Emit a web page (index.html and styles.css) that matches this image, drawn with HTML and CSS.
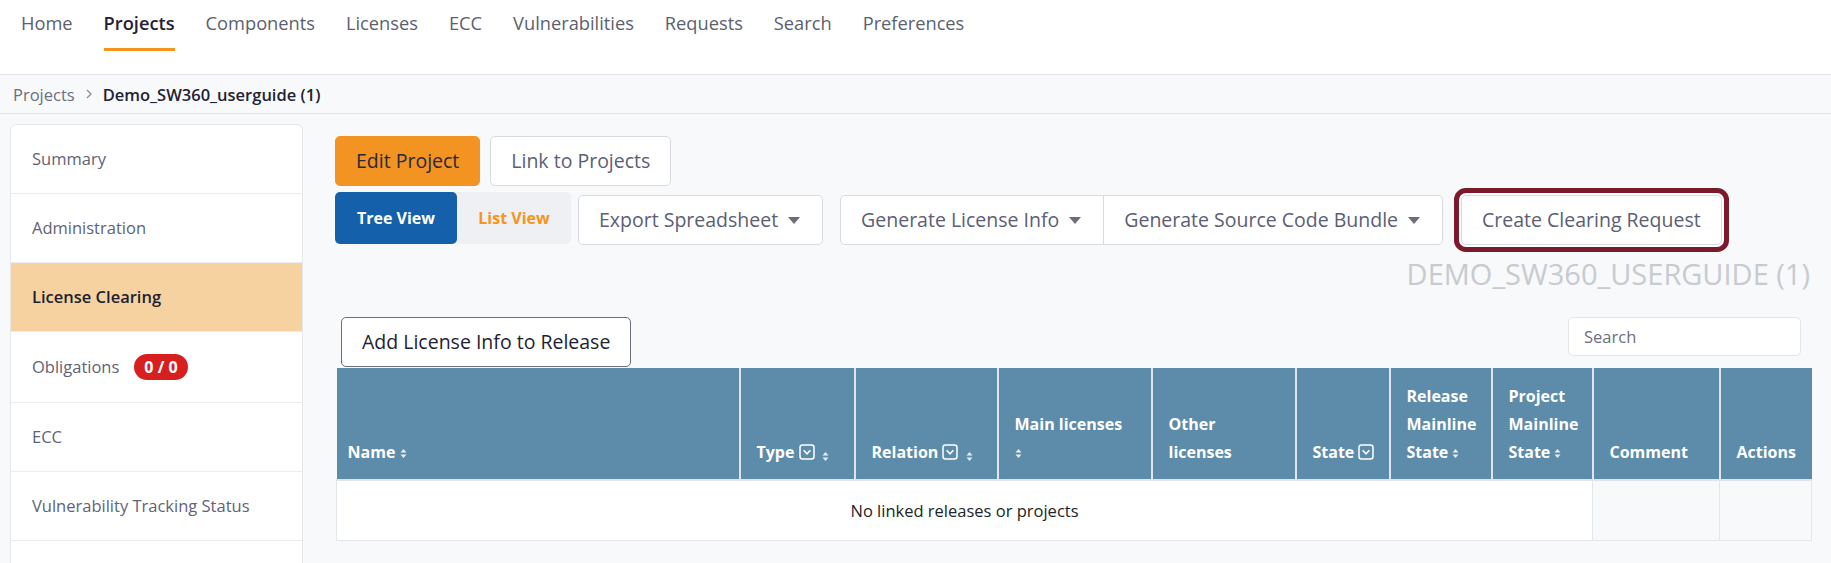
FILE: index.html
```html
<!DOCTYPE html>
<html lang="en">
<head>
<meta charset="utf-8">
<title>Demo_SW360_userguide (1) - Projects</title>
<link rel="stylesheet" href="styles.css">
</head>
<body>
<header class="topbar">
  <nav class="mainnav">
    <a class="nav-link">Home</a>
    <a class="nav-link active">Projects</a>
    <a class="nav-link">Components</a>
    <a class="nav-link">Licenses</a>
    <a class="nav-link">ECC</a>
    <a class="nav-link">Vulnerabilities</a>
    <a class="nav-link">Requests</a>
    <a class="nav-link">Search</a>
    <a class="nav-link">Preferences</a>
  </nav>
</header>
<div class="crumbs">
  <span class="crumb">Projects</span>
  <svg class="crumb-sep" width="6" height="10" viewBox="0 0 6 10"><path d="M1 1l4 4-4 4" fill="none" stroke="#8a8c96" stroke-width="1.2"/></svg>
  <span class="crumb current">Demo_SW360_userguide (1)</span>
</div>
<div class="layout">
  <aside class="sidebar">
    <a class="side-item">Summary</a>
    <a class="side-item">Administration</a>
    <a class="side-item active">License Clearing</a>
    <a class="side-item">Obligations <span class="badge">0 / 0</span></a>
    <a class="side-item">ECC</a>
    <a class="side-item">Vulnerability Tracking Status</a>
    <div class="side-item side-spacer"></div>
  </aside>
  <main class="content">
    <div class="btn-row">
      <button class="btn btn-primary">Edit Project</button>
      <button class="btn">Link to Projects</button>
    </div>
    <div class="btn-row row2">
      <div class="view-toggle">
        <button class="view-btn on">Tree View</button>
        <button class="view-btn off">List View</button>
      </div>
      <button class="btn btn-drop export">Export Spreadsheet <svg class="caret" width="12" height="7" viewBox="0 0 12 7"><path d="M0 0H12L6 7Z"/></svg></button>
      <div class="btn-group">
        <button class="btn btn-drop">Generate License Info <svg class="caret" width="12" height="7" viewBox="0 0 12 7"><path d="M0 0H12L6 7Z"/></svg></button>
        <button class="btn btn-drop">Generate Source Code Bundle <svg class="caret" width="12" height="7" viewBox="0 0 12 7"><path d="M0 0H12L6 7Z"/></svg></button>
      </div>
      <button class="btn btn-focus">Create Clearing Request</button>
    </div>
    <h1 class="project-title">DEMO_SW360_USERGUIDE (1)</h1>
    <div class="table-tools">
      <button class="btn btn-outline">Add License Info to Release</button>
      <input class="search" type="text" placeholder="Search">
    </div>
    <table class="linked">
      <colgroup>
        <col style="width:403px"><col style="width:115px"><col style="width:143px"><col style="width:154px"><col style="width:144px"><col style="width:94px"><col style="width:102px"><col style="width:101px"><col style="width:127px"><col style="width:92px">
      </colgroup>
      <thead>
        <tr>
          <th class="name-col">Name <svg class="sort" width="7" height="11" viewBox="0 0 7 11"><path d="M3.5 1L6.5 4.5H0.5Z M3.5 10L6.5 6.5H0.5Z"/></svg></th>
          <th>Type <svg class="filter" width="16" height="16" viewBox="0 0 16 16"><rect x="1" y="1" width="14" height="14" rx="2.5"/><path d="M4.6 6.3L8 9.8L11.4 6.3"/></svg> <svg class="sort low" width="7" height="11" viewBox="0 0 7 11"><path d="M3.5 1L6.5 4.5H0.5Z M3.5 10L6.5 6.5H0.5Z"/></svg></th>
          <th>Relation <svg class="filter" width="16" height="16" viewBox="0 0 16 16"><rect x="1" y="1" width="14" height="14" rx="2.5"/><path d="M4.6 6.3L8 9.8L11.4 6.3"/></svg> <svg class="sort low" width="7" height="11" viewBox="0 0 7 11"><path d="M3.5 1L6.5 4.5H0.5Z M3.5 10L6.5 6.5H0.5Z"/></svg></th>
          <th>Main licenses<br><svg class="sort" width="7" height="11" viewBox="0 0 7 11"><path d="M3.5 1L6.5 4.5H0.5Z M3.5 10L6.5 6.5H0.5Z"/></svg></th>
          <th>Other<br>licenses</th>
          <th>State <svg class="filter" width="16" height="16" viewBox="0 0 16 16"><rect x="1" y="1" width="14" height="14" rx="2.5"/><path d="M4.6 6.3L8 9.8L11.4 6.3"/></svg></th>
          <th>Release<br>Mainline<br>State <svg class="sort" width="7" height="11" viewBox="0 0 7 11"><path d="M3.5 1L6.5 4.5H0.5Z M3.5 10L6.5 6.5H0.5Z"/></svg></th>
          <th>Project<br>Mainline<br>State <svg class="sort" width="7" height="11" viewBox="0 0 7 11"><path d="M3.5 1L6.5 4.5H0.5Z M3.5 10L6.5 6.5H0.5Z"/></svg></th>
          <th>Comment</th>
          <th>Actions</th>
        </tr>
      </thead>
      <tbody>
        <tr>
          <td class="empty" colspan="8">No linked releases or projects</td>
          <td class="muted"></td>
          <td class="muted"></td>
        </tr>
      </tbody>
    </table>
  </main>
</div>
</body>
</html>
```

FILE: styles.css
```css
* { box-sizing: border-box; }

html, body {
  margin: 0;
  padding: 0;
}

body {
  font-family: "Open Sans", "Noto Sans", sans-serif;
  background: #f8f9fa;
  color: #212529;
  overflow: hidden;
}

/* top navigation */
.topbar {
  background: #fff;
  height: 75px;
  border-bottom: 1px solid #e4e5e8;
}

.mainnav {
  display: flex;
  gap: 31px;
  padding-left: 21px;
}

.nav-link {
  font-size: 18.25px;
  line-height: 26px;
  padding: 10px 0 12px;
  color: #5b5f6f;
  border-bottom: 3px solid transparent;
}

.nav-link.active {
  color: #1f2233;
  font-weight: 600;
  border-bottom-color: #f7941d;
}

/* breadcrumb */
.crumbs {
  display: flex;
  align-items: center;
  height: 39px;
  padding-left: 13px;
  border-bottom: 1px solid #e4e5e8;
  font-size: 16.5px;
}

.crumb { color: #6c6f7e; }

.crumb-sep { margin: 0 11px 0 11px; }

.crumb.current {
  color: #1f2233;
  font-weight: 600;
}

/* layout */
.layout {
  display: flex;
  gap: 32px;
  padding: 10px 20px 0 10px;
}

.sidebar {
  flex: 0 0 293px;
  background: #fff;
  border: 1px solid #e6e7eb;
  border-radius: 6px;
  display: flex;
  flex-direction: column;
}

.side-item {
  display: flex;
  align-items: center;
  padding: 22px 21px;
  font-size: 16.5px;
  line-height: 24px;
  color: #5f6377;
  border-bottom: 1px solid #ebecef;
}

.side-spacer {
  height: 69px;
}

.side-item.active {
  background: #f7d2a1;
  color: #1c1f2e;
  font-weight: 600;
}

.badge {
  display: inline-block;
  margin-left: 15px;
  background: #d81f1f;
  color: #fff;
  font-weight: 700;
  font-size: 16px;
  line-height: 26px;
  padding: 0 10px;
  border-radius: 13px;
}

/* main content */
.content {
  flex: 1;
  padding-top: 12px;
  min-width: 0;
}

.btn-row {
  display: flex;
  gap: 10px;
  align-items: flex-start;
}

.btn {
  font-family: inherit;
  font-size: 19.5px;
  line-height: 28px;
  height: 50px;
  padding: 10px 20px;
  background: #fff;
  color: #5b5e75;
  border: 1px solid #d8dae2;
  border-radius: 5px;
  display: inline-flex;
  align-items: center;
}

.btn-primary {
  background: #f39422;
  border-color: #f39422;
  color: #262a3a;
}

.row2 {
  margin-top: 6px;
}

.view-toggle {
  display: flex;
  height: 52px;
  background: #eef0f4;
  border-radius: 5px;
}

.view-btn {
  font-family: inherit;
  font-size: 16px;
  font-weight: 700;
  border: 0;
  border-radius: 5px;
  background: transparent;
  height: 52px;
}

.view-btn.on {
  background: #1560ab;
  color: #fff;
  width: 122px;
}

.view-btn.off {
  color: #f7941d;
  width: 114px;
}

.row2 .btn {
  margin-top: 3px;
}

.btn-drop .caret {
  margin-left: 10px;
  margin-right: 2px;
  fill: #6a6d80;
}

.export {
  margin-left: -3px;
}

.btn-group {
  display: flex;
  margin-left: 7px;
}

.btn-group .btn {
  margin-top: 3px;
}

.btn-group .btn:first-child {
  border-radius: 5px 0 0 5px;
}

.btn-group .btn:last-child {
  border-radius: 0 5px 5px 0;
  border-left: 0;
}

.btn-focus {
  margin-left: 8px;
  box-shadow: 0 0 0 2px #fff, 0 0 0 7px #7b1a2a;
}

.project-title {
  margin: 9px 0 0;
  text-align: right;
  font-size: 29px;
  line-height: 40px;
  font-weight: 400;
  color: #c7cbd0;
  padding-right: 1px;
}

.table-tools {
  margin-top: 23px;
  display: flex;
  justify-content: space-between;
  align-items: flex-start;
}

.btn-outline {
  margin-left: 6px;
  border-color: #6c6f78;
  color: #1f2233;
}

.search {
  width: 233px;
  height: 39px;
  margin-right: 10px;
  border: 1px solid #e3e5ea;
  border-radius: 5px;
  padding: 0 15px;
  font-family: inherit;
  font-size: 16.5px;
  background: #fff;
  color: #333;
}

.search::placeholder { color: #6b6f82; }

/* table */
.linked {
  margin: 1px 0 0 1px;
  width: 1475px;
  table-layout: fixed;
  border-collapse: collapse;
}

.linked th {
  background: #5d8caa;
  color: #fff;
  font-size: 16px;
  font-weight: 700;
  line-height: 28px;
  text-align: left;
  vertical-align: bottom;
  padding: 14px 6px 13px 16px;
  border: 2px solid #dfe5ea;
  border-top: 0;
}

.linked th:first-child { border-left: 0; }
.linked th:last-child { border-right: 0; }

.linked th.name-col { padding-left: 11px; }

.sort {
  fill: #fff;
  opacity: 0.85;
  vertical-align: -1px;
}

.sort.low {
  vertical-align: -4px;
  margin-left: 3px;
}

.filter {
  vertical-align: -2px;
}

.filter rect,
.filter path {
  fill: none;
  stroke: #fff;
  stroke-width: 1.5;
}

.linked td {
  height: 60px;
  font-size: 16.5px;
  border: 1px solid #e3e6ea;
  padding: 0 12px;
}

.linked td.empty {
  background: #fff;
  text-align: center;
  color: #212529;
}

.linked td.muted {
  background: #f8f9fa;
}
```
